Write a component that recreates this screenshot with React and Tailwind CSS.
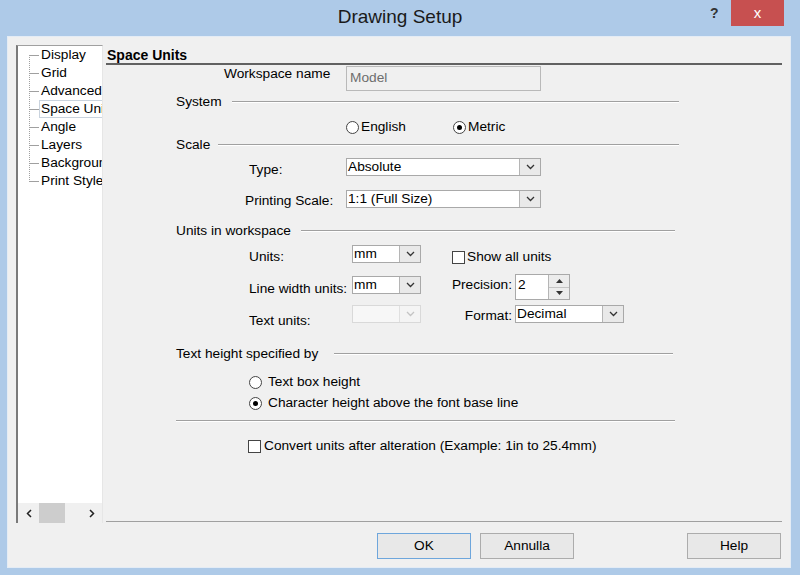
import React from 'react';

const Chevron = ({ color = '#333' }) => (
  <svg width="9" height="6" viewBox="0 0 9 6">
    <path d="M1 1 L4.5 4.5 L8 1" fill="none" stroke={color} strokeWidth="1.3" />
  </svg>
);

const Select = ({ value, width, disabled }) => (
  <div
    className={`flex h-[18px] border ${disabled ? 'border-[#d9d9d9] bg-[#f7f7f7]' : 'border-[#a9a9a9] bg-white'}`}
    style={{ width }}
  >
    <div className="flex-1 pl-[1px] leading-[15px] whitespace-nowrap overflow-hidden">{value}</div>
    <div
      className={`w-[21px] flex items-center justify-center border-l ${disabled ? 'border-[#e0e0e0] bg-[#f4f4f4]' : 'border-[#b5b5b5] bg-[#e9e9e9]'}`}
    >
      <Chevron color={disabled ? '#c4c4c4' : '#333'} />
    </div>
  </div>
);

const Radio = ({ checked }) => (
  <div className="w-[13px] h-[13px] rounded-full border border-[#444] bg-white flex items-center justify-center shrink-0">
    {checked && <div className="w-[5px] h-[5px] rounded-full bg-black" />}
  </div>
);

const Checkbox = () => (
  <div className="w-[13px] h-[13px] border border-[#444] bg-white shrink-0" />
);

const GroupHeader = ({ label, gap, width, className = '' }) => (
  <div className={`flex items-center h-[16px] ml-[70px] ${className}`} style={{ width }}>
    <span className="whitespace-nowrap">{label}</span>
    <div className="flex-1 border-t border-b border-t-[#a0a0a0] border-b-white" style={{ marginLeft: gap }} />
  </div>
);

const Button = ({ label, primary, className = '' }) => (
  <div
    className={`w-[94px] h-[26px] flex items-center justify-center border ${primary ? 'border-[#6ea6dc]' : 'border-[#acacac]'} bg-[#e8e8e8] ${className}`}
  >
    {label}
  </div>
);

const treeItems = ['Display', 'Grid', 'Advanced', 'Space Units', 'Angle', 'Layers', 'Background', 'Print Style'];

const App = () => {
  return (
    <div className="w-[800px] h-[575px] bg-[#aecae8] flex flex-col overflow-hidden text-black text-[13.7px] font-['Liberation_Sans',Arial,sans-serif]">
      {/* title bar */}
      <div className="h-[36px] relative flex items-center justify-center">
        <span className="text-[19px] text-[#1a1a1a] pb-[2px]">Drawing Setup</span>
        <span className="absolute left-[710px] top-[3px] text-[14px] font-bold text-[#333]">?</span>
        <div className="absolute left-[731px] top-0 w-[53px] h-[26px] bg-[#c75050] flex items-center justify-center">
          <span className="text-white text-[15px] leading-none pb-[2px]">x</span>
        </div>
      </div>

      {/* client */}
      <div className="ml-[7px] w-[784px] h-[532px] border border-[#e4ecf5] bg-[#f0f0f0] flex flex-col">
        <div className="flex h-[478px] mt-[8px] ml-[8px] mr-[8px]">
          {/* tree */}
          <div className="w-[87px] flex flex-col bg-white border-l-2 border-t border-l-[#7a7a7a] border-t-[#a0a0a0] border-r border-r-[#e6e6e6] overflow-hidden">
            <div className="flex">
              <svg width="21" height="144" className="shrink-0">
                <line x1="11.5" y1="9" x2="11.5" y2="135" stroke="#a0a0a0" strokeDasharray="1 1" />
                {treeItems.map((_, i) => (
                  <line key={i} x1="11" y1={9.5 + i * 18} x2="21" y2={9.5 + i * 18} stroke="#a0a0a0" />
                ))}
              </svg>
              <div className="flex flex-col">
                {treeItems.map((t, i) => (
                  <div
                    key={t}
                    className={`h-[18px] px-[1px] border whitespace-nowrap leading-[16px] ${i === 3 ? 'border-[#c9d3de]' : 'border-transparent'}`}
                  >
                    {t}
                  </div>
                ))}
              </div>
            </div>
            <div className="flex-1" />
            <div className="h-[20px] flex bg-[#f0f0f0]">
              <div className="w-[21px] flex items-center justify-center">
                <svg width="6" height="9" viewBox="0 0 6 9">
                  <path d="M5 1 L1.5 4.5 L5 8" fill="none" stroke="#222" strokeWidth="1.5" />
                </svg>
              </div>
              <div className="w-[26px] bg-[#cdcdcd]" />
              <div className="flex-1" />
              <div className="w-[21px] flex items-center justify-center">
                <svg width="6" height="9" viewBox="0 0 6 9">
                  <path d="M1 1 L4.5 4.5 L1 8" fill="none" stroke="#222" strokeWidth="1.5" />
                </svg>
              </div>
            </div>
          </div>

          {/* content panel */}
          <div className="flex-1 flex flex-col pl-[3px]">
            <div className="h-[18px] font-bold text-[14px] leading-[18px] pt-[1px] pl-[1px]">Space Units</div>
            <div className="border-t-2 border-[#616161]" />
            <div className="flex-1 flex flex-col border-b border-[#a0a0a0] mb-[1px]">
              {/* workspace name */}
              <div className="flex items-start h-[25px] mt-[1px] ml-[118px]">
                <div className="w-[122px] leading-[16px]">Workspace name</div>
                <div className="w-[195px] h-[25px] border border-[#b9b9b9] bg-[#f0f0f0] text-[#6d6d6d] pl-[3px] flex items-center">
                  Model
                </div>
              </div>

              <GroupHeader label="System" gap={10} width={503} className="mt-[3px]" />

              <div className="flex items-center h-[16px] mt-[9px] ml-[240px]">
                <div className="w-[107px] flex items-center gap-[2px]">
                  <Radio />
                  <span>English</span>
                </div>
                <div className="flex items-center gap-[2px]">
                  <Radio checked />
                  <span>Metric</span>
                </div>
              </div>

              <GroupHeader label="Scale" gap={8} width={503} className="mt-[2px]" />

              <div className="flex items-start h-[18px] mt-[5px] ml-[143px]">
                <div className="w-[97px] mt-[4px] leading-[16px]">Type:</div>
                <Select value="Absolute" width={195} />
              </div>

              <div className="flex items-start h-[18px] mt-[14px] ml-[139px]">
                <div className="w-[101px] mt-[3px] leading-[16px] whitespace-nowrap">Printing Scale:</div>
                <Select value="1:1 (Full Size)" width={195} />
              </div>

              <GroupHeader label="Units in workspace" gap={10} width={499} className="mt-[15px]" />

              <div className="flex items-start h-[18px] mt-[6px] ml-[143px]">
                <div className="w-[103px] mt-[4px] leading-[16px]">Units:</div>
                <Select value="mm" width={69} />
                <div className="flex items-center gap-[2px] h-[16px] mt-[4px] ml-[31px]">
                  <Checkbox />
                  <span>Show all units</span>
                </div>
              </div>

              <div className="flex items-start h-[26px] mt-[11px] ml-[143px]">
                <div className="w-[103px] mt-[7px] leading-[16px] whitespace-nowrap">Line width units:</div>
                <div className="mt-[2px]">
                  <Select value="mm" width={69} />
                </div>
                <div className="w-[94px] mt-[3px] pr-[3px] text-right leading-[16px]">Precision:</div>
                <div className="w-[55px] h-[26px] flex border border-[#a9a9a9] bg-white">
                  <div className="flex-1 pl-[2px] leading-[20px]">2</div>
                  <div className="w-[21px] flex flex-col border-l border-[#b5b5b5]">
                    <div className="flex-1 bg-[#ececec] border-b border-[#c4c4c4] flex items-center justify-center">
                      <svg width="7" height="4" viewBox="0 0 7 4"><path d="M0 4 L3.5 0 L7 4 Z" fill="#333" /></svg>
                    </div>
                    <div className="flex-1 bg-[#ececec] flex items-center justify-center">
                      <svg width="7" height="4" viewBox="0 0 7 4"><path d="M0 0 L3.5 4 L7 0 Z" fill="#333" /></svg>
                    </div>
                  </div>
                </div>
              </div>

              <div className="flex items-start h-[18px] mt-[5px] ml-[143px]">
                <div className="w-[103px] mt-[8px] leading-[16px]">Text units:</div>
                <Select value="" width={69} disabled />
                <div className="w-[94px] mt-[3px] pr-[3px] text-right leading-[16px]">Format:</div>
                <Select value="Decimal" width={109} />
              </div>

              <GroupHeader label="Text height specified by" gap={16} width={497} className="mt-[23px]" />

              <div className="flex items-center gap-[6px] h-[16px] mt-[12px] ml-[143px]">
                <Radio />
                <span>Text box height</span>
              </div>
              <div className="flex items-center gap-[6px] h-[16px] mt-[5px] ml-[143px]">
                <Radio checked />
                <span>Character height above the font base line</span>
              </div>

              <div className="ml-[70px] w-[499px] mt-[9px] border-t border-b border-t-[#a0a0a0] border-b-white" />

              <div className="flex items-center gap-[3px] h-[16px] mt-[16px] ml-[142px]">
                <Checkbox />
                <span>Convert units after alteration (Example: 1in to 25.4mm)</span>
              </div>
            </div>
          </div>
        </div>

        {/* buttons */}
        <div className="flex mt-[10px] ml-[369px]">
          <Button label="OK" primary />
          <Button label="Annulla" className="ml-[9px]" />
          <Button label="Help" className="ml-[113px]" />
        </div>
      </div>
    </div>
  );
};

export default App;
